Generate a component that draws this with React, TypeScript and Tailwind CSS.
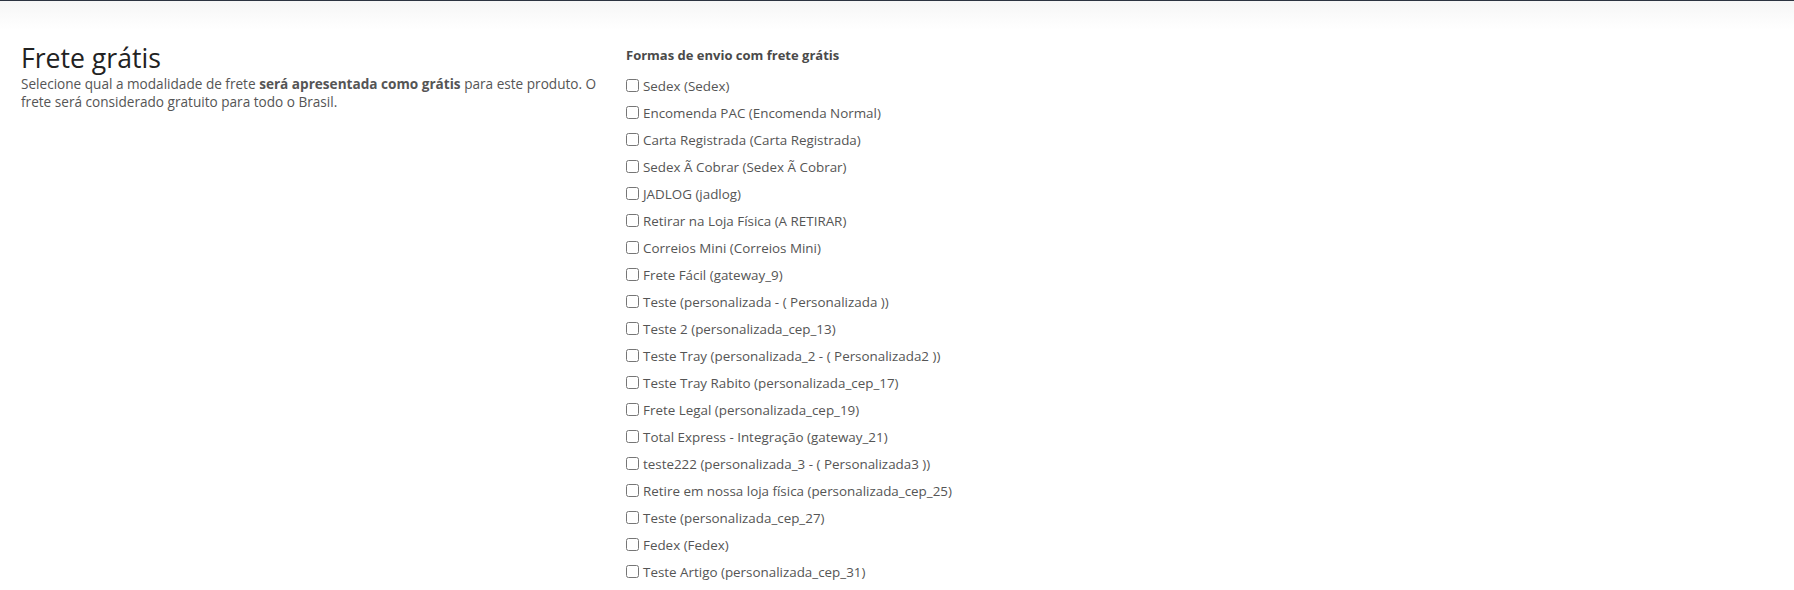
const options = [
  "Sedex (Sedex)",
  "Encomenda PAC (Encomenda Normal)",
  "Carta Registrada (Carta Registrada)",
  "Sedex Ã Cobrar (Sedex Ã Cobrar)",
  "JADLOG (jadlog)",
  "Retirar na Loja Física (A RETIRAR)",
  "Correios Mini (Correios Mini)",
  "Frete Fácil (gateway_9)",
  "Teste (personalizada - ( Personalizada ))",
  "Teste 2 (personalizada_cep_13)",
  "Teste Tray (personalizada_2 - ( Personalizada2 ))",
  "Teste Tray Rabito (personalizada_cep_17)",
  "Frete Legal (personalizada_cep_19)",
  "Total Express - Integração (gateway_21)",
  "teste222 (personalizada_3 - ( Personalizada3 ))",
  "Retire em nossa loja física (personalizada_cep_25)",
  "Teste (personalizada_cep_27)",
  "Fedex (Fedex)",
  "Teste Artigo (personalizada_cep_31)",
];

export default function App() {
  return (
    <div className="min-h-screen bg-white font-['Open_Sans',sans-serif] text-[#555]">
      <div className="h-[30px] border-t border-[#2c3340] bg-gradient-to-b from-[#f6f6f6] to-white" />
      <div className="flex pt-[13px]">
        <div className="w-[611px] shrink-0 pl-[21px]">
          <h1 className="text-[26.6px] leading-[30px] text-[#222]">Frete grátis</h1>
          <p className="mt-[2px] text-[13.6px] leading-[18px]">
            Selecione qual a modalidade de frete <b className="font-bold">será apresentada como grátis</b> para
            este produto. O frete será considerado gratuito para todo o Brasil.
          </p>
        </div>
        <div className="ml-[15px] pt-[3px]">
          <h2 className="text-[13px] font-bold leading-[18px] text-[#4a4a4a]">Formas de envio com frete grátis</h2>
          <div className="mt-[8px] flex flex-col">
            {options.map((o, i) => (
              <label key={i} className="flex h-[27px] items-center text-[13.4px] leading-[18px]">
                <input type="checkbox" className="m-0 mr-[4px] h-[13px] w-[13px]" />
                <span>{o}</span>
              </label>
            ))}
          </div>
        </div>
      </div>
    </div>
  );
}
